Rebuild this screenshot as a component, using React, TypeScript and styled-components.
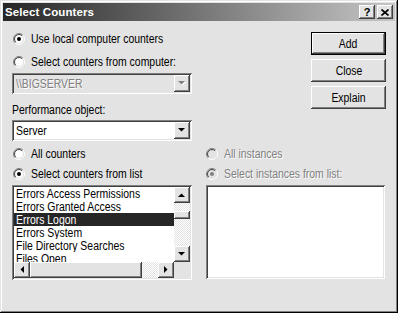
import React from "react";
import styled, { createGlobalStyle, css } from "styled-components";

const FACE = "#e3e3e3";
const SHADOW = "#808080";
const DARK = "#404040";
const HILITE = "#ffffff";

const Global = createGlobalStyle`
  html, body { margin: 0; padding: 0; background: #ffffff; }
  body {
    font-family: "Liberation Sans", Arial, sans-serif;
    font-size: 12.5px;
    color: #000;
  }
`;

const raised = css`
  box-shadow: inset -1px -1px ${DARK}, inset 1px 1px ${HILITE},
    inset -2px -2px ${SHADOW}, inset 2px 2px ${FACE};
`;

const sunken = css`
  box-shadow: inset 1px 1px ${SHADOW}, inset -1px -1px ${HILITE},
    inset 2px 2px ${DARK}, inset -2px -2px ${FACE};
`;

/* The dialog's UI font is a narrow sans; Liberation Sans is condensed to match. */
const Txt = styled.span<{ $center?: boolean }>`
  display: inline-block;
  white-space: nowrap;
  transform: scaleX(0.835);
  transform-origin: ${(p) => (p.$center ? "center" : "left")} center;
`;

const Window = styled.div`
  width: 398px;
  height: 313px;
  box-sizing: border-box;
  padding: 3px;
  background: ${FACE};
  box-shadow: inset -1px -1px #000, inset 1px 1px ${FACE},
    inset -2px -2px ${SHADOW}, inset 2px 2px ${HILITE};
  display: flex;
  flex-direction: column;
`;

const TitleBar = styled.div`
  height: 18px;
  flex: none;
  display: flex;
  align-items: center;
  background: linear-gradient(to right, #262626, #c6c6c6);
  padding: 0 2px 0 2px;
`;

const Title = styled.div`
  flex: 1;
  color: #fff;
  font-family: "Liberation Sans", Arial, sans-serif;
  font-weight: bold;
  font-size: 11.5px;
  letter-spacing: 0.1px;
`;

const CaptionButton = styled.div<{ $gap?: number }>`
  width: 16px;
  height: 14px;
  box-sizing: border-box;
  background: ${FACE};
  ${raised};
  margin-left: ${(p) => p.$gap ?? 0}px;
  display: flex;
  align-items: center;
  justify-content: center;
  font-family: "Liberation Sans", Arial, sans-serif;
  font-weight: bold;
  font-size: 11px;
  line-height: 1;
`;

const Client = styled.div`
  flex: 1;
  padding: 0 9px;
  display: flex;
  flex-direction: column;
`;

const TopSection = styled.div`
  display: flex;
  justify-content: space-between;
  padding-top: 10px;
`;

const LeftColumn = styled.div`
  width: 180px;
  display: flex;
  flex-direction: column;
`;

const ButtonColumn = styled.div`
  width: 75px;
  margin-top: 1px;
  display: flex;
  flex-direction: column;
  gap: 4px;
`;

const PushButton = styled.div<{ $default?: boolean }>`
  width: 75px;
  height: 23px;
  box-sizing: border-box;
  background: ${FACE};
  display: flex;
  align-items: center;
  justify-content: center;
  ${raised};
  ${(p) =>
    p.$default &&
    css`
      border: 1px solid #000;
    `}
`;

const RadioRow = styled.div<{ $indent?: number; $gap?: number; $disabled?: boolean }>`
  height: 16px;
  display: flex;
  align-items: center;
  gap: 6px;
  padding-left: ${(p) => p.$indent ?? 1}px;
  margin-top: ${(p) => p.$gap ?? 0}px;
  white-space: nowrap;
  color: ${(p) => (p.$disabled ? SHADOW : "#000")};
  text-shadow: ${(p) => (p.$disabled ? `1px 1px ${HILITE}` : "none")};
`;

const Label = styled.div<{ $gap?: number }>`
  height: 14px;
  line-height: 14px;
  margin-top: ${(p) => p.$gap ?? 0}px;
`;

const Combo = styled.div<{ $gap?: number; $disabled?: boolean }>`
  height: 21px;
  box-sizing: border-box;
  margin-top: ${(p) => p.$gap ?? 0}px;
  padding: 2px;
  background: ${(p) => (p.$disabled ? FACE : "#fff")};
  ${sunken};
  display: flex;
  align-items: stretch;
`;

const ComboText = styled.div<{ $disabled?: boolean }>`
  flex: 1;
  padding-left: 2px;
  display: flex;
  align-items: center;
  overflow: hidden;
  color: ${(p) => (p.$disabled ? SHADOW : "#000")};
  text-shadow: ${(p) => (p.$disabled ? `1px 1px ${HILITE}` : "none")};
`;

const ArrowButton = styled.div<{ $h?: number }>`
  width: 16px;
  height: ${(p) => (p.$h ? `${p.$h}px` : "auto")};
  box-sizing: border-box;
  flex: none;
  background: ${FACE};
  ${raised};
  display: flex;
  align-items: center;
  justify-content: center;
`;

const BottomSection = styled.div`
  display: flex;
  gap: 14px;
  margin-top: 5px;
`;

const Column = styled.div<{ $w: number }>`
  width: ${(p) => p.$w}px;
  display: flex;
  flex-direction: column;
`;

const ListBox = styled.div<{ $h: number }>`
  height: ${(p) => p.$h}px;
  box-sizing: border-box;
  margin-top: 3px;
  padding: 2px;
  background: #fff;
  ${sunken};
  display: grid;
  grid-template-columns: 1fr 16px;
  grid-template-rows: 1fr 16px;
  overflow: hidden;
`;

const EmptyList = styled.div`
  height: 94px;
  box-sizing: border-box;
  margin-top: 3px;
  background: #fff;
  ${sunken};
`;

const Items = styled.div`
  overflow: hidden;
  display: flex;
  flex-direction: column;
  min-height: 0;
`;

const Item = styled.div<{ $selected?: boolean }>`
  height: 13px;
  flex: none;
  line-height: 14px;
  padding-left: 2px;
  white-space: nowrap;
  overflow: hidden;
  background: ${(p) => (p.$selected ? "#262626" : "transparent")};
  color: ${(p) => (p.$selected ? "#fff" : "#000")};
`;

const checker = css`
  background-color: #fff;
  background-image: repeating-conic-gradient(${FACE} 0 25%, #ffffff 0 50%);
  background-size: 2px 2px;
`;

const VScroll = styled.div`
  display: flex;
  flex-direction: column;
  ${checker};
`;

const HScroll = styled.div`
  display: flex;
  ${checker};
`;

const Track = styled.div`
  flex: 1;
`;

const Thumb = styled.div<{ $vertical?: boolean }>`
  background: ${FACE};
  box-sizing: border-box;
  ${raised};
  ${(p) =>
    p.$vertical
      ? css`
          height: 8px;
          margin-top: 8px;
        `
      : css`
          width: 112px;
          height: 16px;
        `}
`;

const Corner = styled.div`
  background: ${FACE};
`;

const Arrow: React.FC<{ dir: "up" | "down" | "left" | "right"; disabled?: boolean }> = ({ dir, disabled }) => {
  const fill = disabled ? SHADOW : "#000";
  const pts: Record<string, string> = {
    down: "0,0 7,0 3.5,3.5",
    up: "0,4 7,4 3.5,0.5",
    left: "4,0 4,7 0.5,3.5",
    right: "0,0 0,7 3.5,3.5",
  };
  const vertical = dir === "up" || dir === "down";
  const w = vertical ? 7 : 4;
  const h = vertical ? 4 : 7;
  return (
    <svg width={w + 1} height={h + 1} viewBox={`0 0 ${w + 1} ${h + 1}`} style={{ display: "block" }}>
      {disabled && <polygon points={pts[dir]} fill={HILITE} transform="translate(1,1)" />}
      <polygon points={pts[dir]} fill={fill} />
    </svg>
  );
};

const arc = (r: number, first: boolean) => {
  const d = r * Math.SQRT1_2;
  const bl = `${6 - d},${6 + d}`;
  const tr = `${6 + d},${6 - d}`;
  return first ? `M${bl} A${r},${r} 0 0 1 ${tr}` : `M${tr} A${r},${r} 0 0 1 ${bl}`;
};

const RadioIcon: React.FC<{ checked?: boolean; disabled?: boolean }> = ({ checked, disabled }) => (
  <svg width="12" height="12" viewBox="0 0 12 12" style={{ display: "block", flex: "none" }}>
    <circle cx="6" cy="6" r="4.5" fill={disabled ? FACE : "#fff"} />
    <path d={arc(5.5, true)} stroke={SHADOW} fill="none" strokeWidth="1" />
    <path d={arc(5.5, false)} stroke={HILITE} fill="none" strokeWidth="1" />
    <path d={arc(4.5, true)} stroke={DARK} fill="none" strokeWidth="1" />
    <path d={arc(4.5, false)} stroke={FACE} fill="none" strokeWidth="1" />
    {checked && <circle cx="6" cy="6" r="2" fill={disabled ? SHADOW : "#000"} />}
  </svg>
);

const Radio: React.FC<{
  label: string;
  checked?: boolean;
  disabled?: boolean;
  indent?: number;
  gap?: number;
}> = ({ label, checked, disabled, indent, gap }) => (
  <RadioRow $indent={indent} $gap={gap} $disabled={disabled}>
    <RadioIcon checked={checked} disabled={disabled} />
    <Txt>{label}</Txt>
  </RadioRow>
);

const counters = [
  "Errors Access Permissions",
  "Errors Granted Access",
  "Errors Logon",
  "Errors System",
  "File Directory Searches",
  "Files Open",
];

export default function App() {
  return (
    <>
      <Global />
      <Window>
        <TitleBar>
          <Title>Select Counters</Title>
          <CaptionButton>?</CaptionButton>
          <CaptionButton $gap={2}>
            <svg width="8" height="7" viewBox="0 0 8 7" style={{ display: "block" }}>
              <path d="M0.5 0.5 L7.5 6.5 M7.5 0.5 L0.5 6.5" stroke="#000" strokeWidth="1.6" />
            </svg>
          </CaptionButton>
        </TitleBar>
        <Client>
          <TopSection>
            <LeftColumn>
              <Radio label="Use local computer counters" checked />
              <Radio label="Select counters from computer:" gap={7} />
              <Combo $gap={3} $disabled>
                <ComboText $disabled>
                  <Txt>\\BIGSERVER</Txt>
                </ComboText>
                <ArrowButton>
                  <Arrow dir="down" disabled />
                </ArrowButton>
              </Combo>
              <Label $gap={9}>
                <Txt>Performance object:</Txt>
              </Label>
              <Combo $gap={3}>
                <ComboText>
                  <Txt>Server</Txt>
                </ComboText>
                <ArrowButton>
                  <Arrow dir="down" />
                </ArrowButton>
              </Combo>
            </LeftColumn>
            <ButtonColumn>
              <PushButton $default>
                <Txt $center>Add</Txt>
              </PushButton>
              <PushButton>
                <Txt $center>Close</Txt>
              </PushButton>
              <PushButton>
                <Txt $center>Explain</Txt>
              </PushButton>
            </ButtonColumn>
          </TopSection>
          <BottomSection>
            <Column $w={180}>
              <Radio label="All counters" />
              <Radio label="Select counters from list" checked gap={4} />
              <ListBox $h={95}>
                <Items>
                  {counters.map((c) => (
                    <Item key={c} $selected={c === "Errors Logon"}>
                      <Txt>{c}</Txt>
                    </Item>
                  ))}
                </Items>
                <VScroll>
                  <ArrowButton $h={16}>
                    <Arrow dir="up" />
                  </ArrowButton>
                  <Track>
                    <Thumb $vertical />
                  </Track>
                  <ArrowButton $h={16}>
                    <Arrow dir="down" />
                  </ArrowButton>
                </VScroll>
                <HScroll>
                  <ArrowButton $h={16}>
                    <Arrow dir="left" />
                  </ArrowButton>
                  <Thumb />
                  <Track />
                  <ArrowButton $h={16}>
                    <Arrow dir="right" />
                  </ArrowButton>
                </HScroll>
                <Corner />
              </ListBox>
            </Column>
            <Column $w={179}>
              <Radio label="All instances" disabled indent={0} />
              <Radio label="Select instances from list:" checked disabled indent={0} gap={4} />
              <EmptyList />
            </Column>
          </BottomSection>
        </Client>
      </Window>
    </>
  );
}
